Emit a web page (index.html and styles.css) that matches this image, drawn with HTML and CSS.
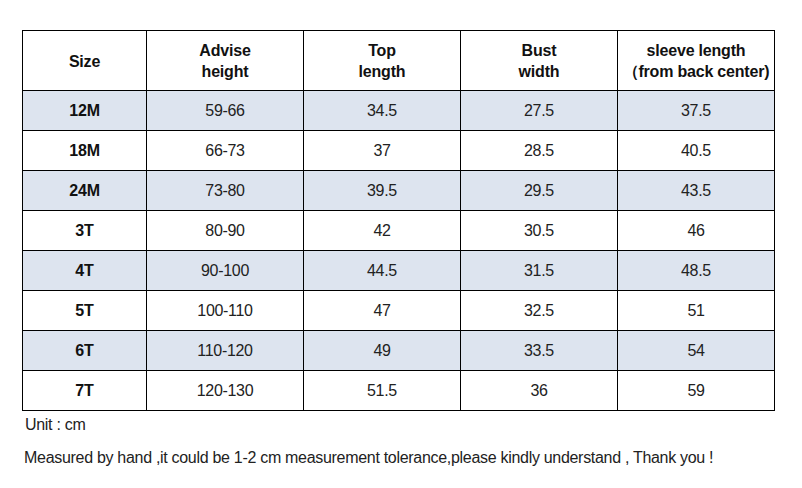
FILE: index.html
```html
<!DOCTYPE html>
<html>
<head>
<meta charset="utf-8">
<link rel="stylesheet" href="styles.css">
</head>
<body>
<div class="page">
  <table class="chart">
    <colgroup>
      <col class="c-size">
      <col class="c-val">
      <col class="c-val">
      <col class="c-val">
      <col class="c-val">
    </colgroup>
    <thead>
      <tr class="head">
        <th>Size</th>
        <th>Advise<br>height</th>
        <th>Top<br>length</th>
        <th>Bust<br>width</th>
        <th>sleeve length<br>（from back center)</th>
      </tr>
    </thead>
    <tbody>
      <tr class="shade"><th>12M</th><td>59-66</td><td>34.5</td><td>27.5</td><td>37.5</td></tr>
      <tr><th>18M</th><td>66-73</td><td>37</td><td>28.5</td><td>40.5</td></tr>
      <tr class="shade"><th>24M</th><td>73-80</td><td>39.5</td><td>29.5</td><td>43.5</td></tr>
      <tr><th>3T</th><td>80-90</td><td>42</td><td>30.5</td><td>46</td></tr>
      <tr class="shade"><th>4T</th><td>90-100</td><td>44.5</td><td>31.5</td><td>48.5</td></tr>
      <tr><th>5T</th><td>100-110</td><td>47</td><td>32.5</td><td>51</td></tr>
      <tr class="shade"><th>6T</th><td>110-120</td><td>49</td><td>33.5</td><td>54</td></tr>
      <tr><th>7T</th><td>120-130</td><td>51.5</td><td>36</td><td>59</td></tr>
    </tbody>
  </table>
  <p class="unit">Unit : cm</p>
  <p class="note">Measured by hand ,it could be 1-2 cm measurement tolerance,please kindly understand , Thank you !</p>
</div>
</body>
</html>
```

FILE: styles.css
```css
html, body {
  margin: 0;
  padding: 0;
  background: #ffffff;
}
body {
  font-family: "Liberation Sans", Arial, sans-serif;
  color: #111;
}
.page {
  padding: 30px 0 0 22px;
}
.chart {
  border-collapse: collapse;
  table-layout: fixed;
  width: 752px;
  font-size: 16px;
}
.c-size { width: 124px; }
.c-val { width: 157px; }
.chart th,
.chart td {
  border: 1px solid #000;
  text-align: center;
  vertical-align: middle;
  padding: 0;
}
.chart th {
  font-weight: bold;
  color: #111;
  letter-spacing: -0.2px;
}
.chart td {
  font-weight: normal;
  color: #222;
  letter-spacing: -0.3px;
}
.head {
  height: 60px;
}
.head th {
  line-height: 21px;
  padding-top: 1px;
}
.chart tbody tr {
  height: 40px;
}
.shade {
  background: #dde4ef;
}
.unit {
  margin: 5px 0 0 3px;
  font-size: 16px;
  line-height: 18px;
  color: #222;
  letter-spacing: -0.3px;
}
.note {
  margin: 15px 0 0 2px;
  font-size: 16px;
  line-height: 18px;
  color: #222;
  letter-spacing: -0.3px;
}
```
